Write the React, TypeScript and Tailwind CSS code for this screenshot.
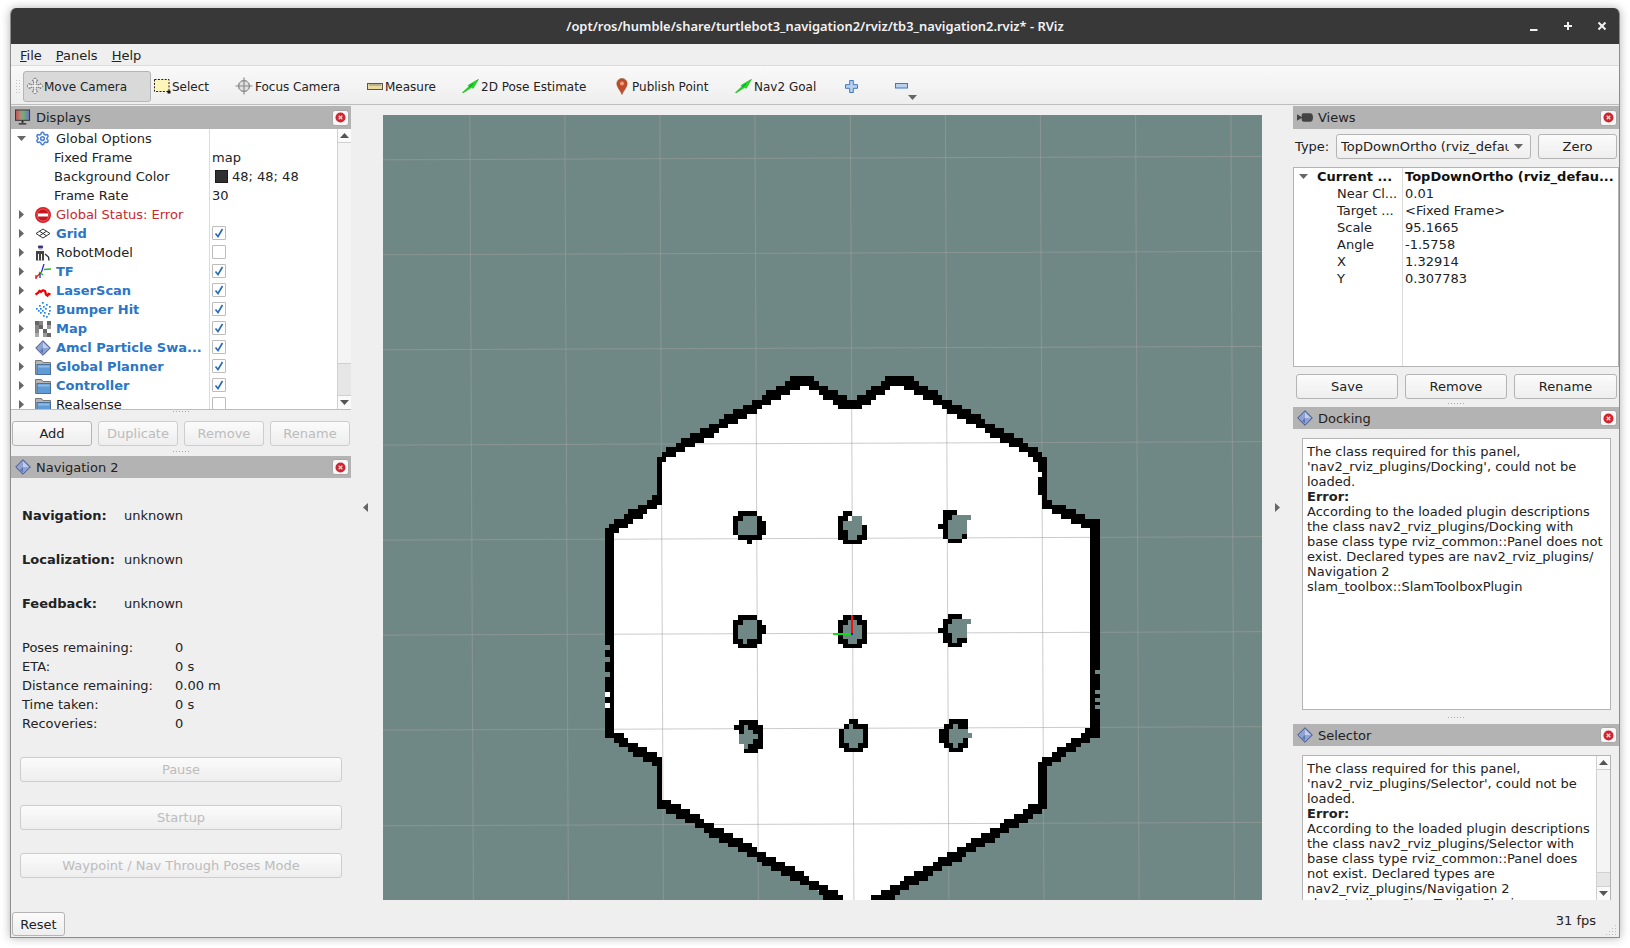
import { Settings } from 'lucide-react';
import type { ReactNode } from 'react';

// ---------- small icons ----------
function CloseBtn() {
  return (
    <div className="flex items-center justify-center w-[17px] h-[16px] bg-[#f7f7f7] border border-[#a8a8a8] rounded-[3px]">
      <svg width="11" height="11" viewBox="0 0 11 11">
        <circle cx="5.5" cy="5.5" r="5" fill="#d0242e" />
        <path d="M3.7 3.7l3.6 3.6M7.3 3.7l-3.6 3.6" stroke="#f5d5d5" strokeWidth="1.3" />
      </svg>
    </div>
  );
}

function MonitorIcon() {
  return (
    <svg width="17" height="17" viewBox="0 0 17 17">
      <defs>
        <linearGradient id="mon" x1="0" x2="1" y1="0" y2="0">
          <stop offset="0" stopColor="#c05050" />
          <stop offset="0.35" stopColor="#b08a80" />
          <stop offset="0.55" stopColor="#70b070" />
          <stop offset="1" stopColor="#7070c8" />
        </linearGradient>
      </defs>
      <rect x="0.5" y="0.5" width="15" height="11" fill="url(#mon)" stroke="#333" />
      <path d="M7 12h2v2H7zM4 14.5h8V16H4z" fill="#222" />
    </svg>
  );
}

function DiamondIcon({ size = 16 }: { size?: number }) {
  return (
    <svg width={size} height={size} viewBox="0 0 16 16">
      <path d="M8 .7L15.3 8 8 15.3.7 8z" fill="#8fa3d3" stroke="#3d4f8a" />
      <path d="M8 2.5L13.5 8 8 8z" fill="#c3cfe9" />
      <path d="M8 8l-3 3 3 2.5z" fill="#5f76b4" />
    </svg>
  );
}

function FolderIcon() {
  return (
    <svg width="16" height="16" viewBox="0 0 16 16">
      <path d="M.5 1.500h6l1.500 2h7.500v12H.5z" fill="#b4b4b4" stroke="#777" />
      <rect x="2" y="5.500" width="13.500" height="10" fill="#5f9bd6" stroke="#49709c" />
      <rect x="3" y="6.500" width="11.500" height="2" fill="#8dbbe6" />
    </svg>
  );
}

function RowIcon({ name }: { name: string }) {
  if (name === 'gear') return <Settings className="w-[15px] h-[15px] text-[#4a7fd4]" strokeWidth={2.4} />;
  if (name === 'status')
    return (
      <svg width="16" height="16" viewBox="0 0 16 16">
        <circle cx="8" cy="8" r="8" fill="#d81e26" />
        <circle cx="8" cy="8" r="6" fill="#c8161e" stroke="#f0a0a0" strokeWidth="0.5" />
        <rect x="3" y="6.5" width="10" height="3" fill="#fff" />
      </svg>
    );
  if (name === 'grid')
    return (
      <svg width="16" height="16" viewBox="0 0 16 16" fill="none" stroke="#333" strokeWidth="1">
        <path d="M8 3L15 7.500 8 12 1 7.500z" />
        <path d="M4.500 5.200L11.500 9.800M11.500 5.200L4.500 9.800" />
      </svg>
    );
  if (name === 'robot')
    return (
      <svg width="16" height="16" viewBox="0 0 16 16">
        <rect x="3" y="0.500" width="5" height="3" rx="1" fill="#3a3a7a" />
        <rect x="3.500" y="3.800" width="4" height="1.200" fill="#ccc" />
        <rect x="1" y="6" width="8" height="9.500" fill="#444" />
        <path d="M3 9h1v6.500H3zM6 9h1v6.500H6z" fill="#fff" />
        <path d="M10 9l3.500 3 .5 3.500" stroke="#333" strokeWidth="1.400" fill="none" />
      </svg>
    );
  if (name === 'tf')
    return (
      <svg width="16" height="16" viewBox="0 0 16 16" fill="none" strokeWidth="1.300">
        <path d="M6.500 8L9 0" stroke="#2a2ad0" />
        <path d="M9 5.500L16 5" stroke="#22c022" />
        <path d="M6.500 8L.5 14" stroke="#e02020" />
        <path d="M1 11v4" stroke="#e02020" />
        <path d="M4 8l4 3" stroke="#22c022" />
        <path d="M5 9v5" stroke="#2a2ad0" />
      </svg>
    );
  if (name === 'laser')
    return (
      <svg width="16" height="16" viewBox="0 0 16 16" fill="none">
        <path d="M.5 11.500L3 10l1.500-2 1.500.8 2-1.600 2 .8 1 3.500 1.500 1 1-1.700 2 .700" stroke="#f00000" strokeWidth="2.300" />
      </svg>
    );
  if (name === 'bumper')
    return (
      <svg width="16" height="16" viewBox="0 0 16 16" fill="#1f84e8">
        {[
          [7, 0], [11, 2], [4, 3], [8, 4], [14, 4], [1, 6], [5, 6], [10, 6], [3, 8], [7, 8], [14, 8], [5, 10], [9, 10], [13, 11], [8, 13], [11, 14],
        ].map(([x, y], i) => (
          <rect key={i} x={x} y={y} width="1.700" height="1.700" />
        ))}
      </svg>
    );
  if (name === 'map')
    return (
      <svg width="16" height="16" viewBox="0 0 16 16">
        <rect width="16" height="16" fill="#fff" />
        {[
          [0, 0, '#666'], [4, 0, '#888'], [12, 0, '#666'], [0, 4, '#888'], [4, 4, '#666'], [12, 4, '#999'], [8, 4, '#fff'], [0, 8, '#888'], [8, 8, '#666'], [0, 12, '#aaa'], [8, 12, '#999'], [12, 12, '#666'],
        ].map(([x, y, c], i) => (
          <rect key={i} x={x as number} y={y as number} width="4" height="4" fill={c as string} />
        ))}
      </svg>
    );
  if (name === 'diamond') return <DiamondIcon />;
  if (name === 'folder') return <FolderIcon />;
  return null;
}

// ---------- toolbar icons ----------
function MoveIcon() {
  return (
    <svg width="18" height="18" viewBox="0 0 18 18">
      <path
        d="M9 .8l3 3H10.300v3.900h3.900V6l3 3-3 3v-1.700h-3.900v3.900H12l-3 3-3-3h1.700v-3.900H3.800V12l-3-3 3-3v1.700h3.900V3.800H6z"
        fill="#f2f2f2"
        stroke="#666"
        strokeWidth="0.900"
        strokeDasharray="1.600 0.600"
      />
    </svg>
  );
}
function SelectIcon() {
  return (
    <svg width="17" height="15" viewBox="0 0 17 15">
      <rect x="0.500" y="0.500" width="14.500" height="12" fill="#fdf6b8" stroke="#222" strokeDasharray="2 1.400" />
      <rect x="13.500" y="11.500" width="3" height="3" fill="#111" />
    </svg>
  );
}
function FocusIcon() {
  return (
    <svg width="18" height="18" viewBox="0 0 18 18" fill="none" stroke="#8a8a8a">
      <circle cx="9" cy="9" r="5.500" fill="#e0e0e0" />
      <path d="M9 .5v17M.5 9h17" strokeWidth="1.200" />
      <path d="M6 4h6M6 14h6M4 6v6M14 6v6" strokeWidth="0.700" />
    </svg>
  );
}
function RulerIcon() {
  return (
    <svg width="16" height="7" viewBox="0 0 16 7">
      <rect x="0.500" y="0.500" width="15" height="6" fill="#e9dca2" stroke="#555" />
      <path d="M3 1v2M5 1v2M7 1v2M9 1v2M11 1v2M13 1v2" stroke="#666" strokeWidth="0.700" />
    </svg>
  );
}
function GreenArrow() {
  return (
    <svg width="17" height="14" viewBox="0 0 17 14">
      <path d="M.5 13.500L7 7.500l-.8-1.200L16.500.3l-5.500 9.200-1.200-1.300L1 14z" fill="#14e414" stroke="#0aa00a" strokeWidth="0.500" />
      <path d="M7 8l4-3" stroke="#055" strokeWidth="0.600" />
    </svg>
  );
}
function PinIcon() {
  return (
    <svg width="12" height="17" viewBox="0 0 12 17">
      <path d="M6 16.500C4.500 12.500.8 9.500.8 5.600a5.200 5.200 0 0 1 10.400 0C11.200 9.500 7.500 12.500 6 16.500z" fill="#c2492b" stroke="#8c5a2a" strokeWidth="0.600" />
      <circle cx="6" cy="5.500" r="2" fill="#e9a37a" />
    </svg>
  );
}
function PlusIcon() {
  return (
    <svg width="13" height="13" viewBox="0 0 13 13">
      <path d="M4.700 .5h3.600v4.200h4.200v3.600H8.300v4.200H4.700V8.300H.5V4.700h4.200z" fill="#b9d0ee" stroke="#3f78c0" />
    </svg>
  );
}
function MinusIcon() {
  return (
    <svg width="13" height="6" viewBox="0 0 13 6">
      <rect x="0.500" y="0.500" width="12" height="4.500" fill="#b9d0ee" stroke="#3f78c0" />
    </svg>
  );
}

// ---------- generic widgets ----------
function Btn({ children, w, h = 'h-[25px]', disabled = false }: { children: ReactNode; w: string; h?: string; disabled?: boolean }) {
  return (
    <div
      className={`${w} ${h} flex items-center justify-center rounded-[3px] border bg-gradient-to-b from-[#fbfbfb] to-[#eeeeee] ${
        disabled ? 'border-[#cdcdcd] text-[#bcbcbc]' : 'border-[#b4b4b4] text-[#222222]'
      }`}
    >
      {children}
    </div>
  );
}

function Dots() {
  return (
    <div className="flex justify-center gap-[2px]">
      {[0, 1, 2, 3, 4, 5].map((i) => (
        <span key={i} className="w-px h-px bg-[#a8a8a8]" />
      ))}
    </div>
  );
}

function Triangle({ dir, color = '#666666' }: { dir: 'r' | 'd' | 'u' | 'l'; color?: string }) {
  const pts = { r: '1,0 6,4.500 1,9', d: '0,1 9,1 4.500,6', u: '0,6 9,6 4.500,1', l: '6,0 1,4.500 6,9' }[dir];
  const wide = dir === 'd' || dir === 'u';
  return (
    <svg width={wide ? 9 : 7} height={wide ? 7 : 9} viewBox={wide ? '0 0 9 7' : '0 0 7 9'}>
      <polygon points={pts} fill={color} />
    </svg>
  );
}

function DockTitle({ icon, title, h }: { icon: ReactNode; title: string; h: string }) {
  return (
    <div className={`${h} shrink-0 flex items-center bg-[#b3b3b3] pl-[4px] pr-[2px]`}>
      <span className="w-[16px] flex justify-center">{icon}</span>
      <span className="ml-[5px] flex-1 text-[#222222]">{title}</span>
      <CloseBtn />
    </div>
  );
}

function Scroll({ children }: { children: ReactNode }) {
  return <div className="w-[14px] shrink-0 flex flex-col border-l border-[#d0d0d0] bg-[#f4f4f4]">{children}</div>;
}
function ScrollBtn({ dir }: { dir: 'u' | 'd' }) {
  return (
    <div className={`h-[14px] shrink-0 flex items-center justify-center bg-[#fafafa] ${dir === 'u' ? 'border-b' : 'border-t'} border-[#d0d0d0]`}>
      <Triangle dir={dir} color="#555555" />
    </div>
  );
}

// ---------- Displays tree ----------
type Row = { name: string; icon?: string; bold?: boolean; check?: boolean; value?: string; child?: boolean; arrow?: 'r' | 'd'; red?: boolean; swatch?: boolean };
const displayRows: Row[] = [
  { name: 'Global Options', icon: 'gear', arrow: 'd' },
  { name: 'Fixed Frame', child: true, value: 'map' },
  { name: 'Background Color', child: true, value: '48; 48; 48', swatch: true },
  { name: 'Frame Rate', child: true, value: '30' },
  { name: 'Global Status: Error', icon: 'status', arrow: 'r', red: true },
  { name: 'Grid', icon: 'grid', arrow: 'r', bold: true, check: true },
  { name: 'RobotModel', icon: 'robot', arrow: 'r', check: false },
  { name: 'TF', icon: 'tf', arrow: 'r', bold: true, check: true },
  { name: 'LaserScan', icon: 'laser', arrow: 'r', bold: true, check: true },
  { name: 'Bumper Hit', icon: 'bumper', arrow: 'r', bold: true, check: true },
  { name: 'Map', icon: 'map', arrow: 'r', bold: true, check: true },
  { name: 'Amcl Particle Swa...', icon: 'diamond', arrow: 'r', bold: true, check: true },
  { name: 'Global Planner', icon: 'folder', arrow: 'r', bold: true, check: true },
  { name: 'Controller', icon: 'folder', arrow: 'r', bold: true, check: true },
  { name: 'Realsense', icon: 'folder', arrow: 'r', check: false },
];

function Check({ on }: { on: boolean }) {
  return (
    <div className="w-[14px] h-[14px] mb-[2px] flex items-center justify-center bg-white border border-[#bcbcbc] rounded-[1px]">
      {on && (
        <svg width="10" height="10" viewBox="0 0 10 10" fill="none">
          <path d="M1.500 5.500L4 8.500 8.500 1" stroke="#2a6cb8" strokeWidth="1.700" />
        </svg>
      )}
    </div>
  );
}

function DisplayRow({ r }: { r: Row }) {
  const color = r.red ? 'text-[#c8282e]' : r.bold ? 'text-[#2a76c6] font-bold' : 'text-[#222222]';
  return (
    <div className="h-[19px] shrink-0 flex items-center">
      <div className="w-[198px] shrink-0 flex items-center">
        <span className="w-[20px] flex justify-center pl-[1px]">{r.arrow && <Triangle dir={r.arrow} />}</span>
        {r.child ? (
          <span className="ml-[23px] whitespace-nowrap text-[#222222]">{r.name}</span>
        ) : (
          <>
            <span className="w-[17px] ml-[3px] flex justify-center">{r.icon && <RowIcon name={r.icon} />}</span>
            <span className={`ml-[5px] whitespace-nowrap ${color}`}>{r.name}</span>
          </>
        )}
      </div>
      <div className="flex-1 h-full flex items-center border-l border-[#dcdcdc] pl-[2px]">
        {r.check !== undefined && <Check on={r.check} />}
        {r.swatch && <span className="ml-[3px] mr-[4px] w-[13px] h-[13px] bg-[#303030] border border-[#1c1c1c]" />}
        {r.value && <span className="text-[#222222]">{r.value}</span>}
      </div>
    </div>
  );
}

// ---------- 3D view drawing ----------
const CELL = 4.76;
type Seg = [number, number, number, number, number, number];
const segs: Seg[] = [
  [607, 531, 657, 498, 0, 1],
  [659, 457, 659, 500, 0, 0],
  [662, 455, 803, 377, 0, 1],
  [793, 378, 812, 378, 0, 1],
  [812, 382, 847, 402, 0, 1],
  [842, 403, 861, 403, 0, 1],
  [860, 400, 895, 377, 0, 1],
  [893, 378, 910, 378, 0, 1],
  [908, 381, 1042, 455, 0, 1],
  [1043, 457, 1043, 503, 0, 0],
  [1039, 462, 1039, 472, 0, 0],
  [1039, 477, 1039, 494, 0, 0],
  [1043, 500, 1090, 523, 0, 1],
  [1091, 523, 1091, 735, 1, 0],
  [1088, 737, 1047, 765, 0, -1],
  [1040, 762, 1040, 806, 1, 0],
  [1043, 808, 868, 908, 0, -1],
  [606, 533, 606, 735, 1, 0],
  [615, 735, 658, 759, 0, 1],
  [660, 763, 660, 805, 0, 0],
  [663, 801, 838, 896, 0, 1],
];

// diagonal bands are about 2 cells tall, walls are whole cells
function wallCells() {
  const seen = new Map<string, { x: number; y: number; w: number; h: number }>();
  for (const [x1, y1, x2, y2, ox, oy] of segs) {
    const n = Math.ceil(Math.hypot(x2 - x1, y2 - y1));
    for (let i = 0; i <= n; i++) {
      const cx = Math.floor((x1 + ((x2 - x1) * i) / n) / CELL);
      const cy = Math.floor((y1 + ((y2 - y1) * i) / n) / CELL);
      const x = cx * CELL;
      const y = cy * CELL;
      const h = oy ? CELL * 2 : CELL;
      const w = ox ? CELL * 2 : CELL;
      seen.set(`${cx},${cy},${oy}`, { x, y: oy < 0 ? y - CELL : y, w, h });
    }
  }
  return [...seen.values()];
}

const obstacles: { x: number; y: number; m: string[] }[] = [
  { x: 733, y: 511, m: [' ####  ', '##...# ', '#....##', '#....##', '#....##', ' ##### ', '   #   '] },
  { x: 838, y: 511, m: [' ##   ', '## .. ', '#.... ', '#....#', '##...#', '##..##', ' #### '] },
  { x: 938, y: 510, m: [' ###   ', ' ##....', ' #.... ', '##.... ', ' #.... ', ' #...# ', '  ###  '] },
  { x: 733, y: 615, m: [' ####  ', '##...# ', '#....##', '#....##', '#....# ', '##.### ', ' ####  '] },
  { x: 838, y: 615, m: [' #### ', '##..##', '#....#', '#....#', '#....#', '##..##', ' #### '] },
  { x: 938, y: 614, m: ['  ###  ', ' ##....', ' #.... ', '##.... ', ' ##... ', ' ##.## ', '  ###  '] },
  { x: 734, y: 720, m: [' #### ', '##.###', ' #..##', ' ....#', ' ...##', '  .###', '  ### '] },
  { x: 839, y: 719, m: ['  ##  ', ' #.###', '#....#', '#....#', '#....#', '##..##', ' #### '] },
  { x: 939, y: 719, m: ['  #### ', ' ##.## ', '##.... ', '##.....', '##...# ', ' ##.## ', '  ###  '] },
];

const TEAL = '#708885';
const vGrid = [376, 471, 566, 661, 756, 851.5, 946.5, 1041.5, 1136.7, 1232];
const hGrid = [159, 254, 349, 444.3, 539.3, 634.3, 729.3, 825];

function MapView() {
  const poly = '610,533 660,500 660,459 803,380 847,405 897,380 1042,459 1042,502 1092,527 1092,735 1045,763 1045,806 875,900 835,900 661,803 661,762 612,735';
  return (
    <svg width="879" height="785" viewBox="383 115 879 785" className="block">
      <rect x="383" y="115" width="879" height="785" fill={TEAL} />
      <polygon points={poly} fill="#ffffff" />
      {vGrid.map((x) => (
        <line key={x} x1={x - 1.1} y1={115} x2={x + 2.4} y2={900} stroke="#a0a0a0" strokeOpacity="0.55" />
      ))}
      {hGrid.map((y) => (
        <line key={y} x1={383} y1={y + 0.8} x2={1262} y2={y - 2.6} stroke="#a0a0a0" strokeOpacity="0.55" />
      ))}
      <g shapeRendering="crispEdges">
        {wallCells().map((c) => (
          <rect key={`${c.x},${c.y},${c.h},${c.w}`} x={c.x} y={c.y} width={c.w} height={c.h} fill="#000000" />
        ))}
        {/* notches along the outer walls */}
        {[645, 657, 672].map((y) => (
          <rect key={y} x="605" y={y} width="5" height="5" fill={TEAL} />
        ))}
        {[692, 703].map((y) => (
          <rect key={y} x="605" y={y} width="5" height="5" fill="#ffffff" />
        ))}
        {[670, 690, 698, 705].map((y) => (
          <rect key={y} x="1095" y={y} width="5" height="4" fill={TEAL} />
        ))}
        <rect x="1037" y="472" width="5" height="5" fill="#ffffff" />
        {obstacles.map((o, k) =>
          o.m.map((row, j) =>
            row.split('').map((c, i) =>
              c === ' ' ? null : (
                <rect key={`${k}-${j}-${i}`} x={o.x + i * CELL} y={o.y + j * CELL} width={CELL} height={CELL} fill={c === '#' ? '#000000' : TEAL} />
              ),
            ),
          ),
        )}
        <rect x="833" y="633" width="19" height="2" fill="#10e010" />
        <rect x="851" y="615" width="2" height="19" fill="#f01010" />
        <rect x="851" y="633" width="2" height="2" fill="#1010f0" />
      </g>
    </svg>
  );
}

// ---------- error text panels ----------
function ErrorText({ lines }: { lines: string[] }) {
  return (
    <div className="flex-1 overflow-hidden pl-[4px] pt-[5px] text-[#222222] leading-[15px] whitespace-nowrap">
      {lines.map((l, i) => (
        <div key={i} className={`h-[15px] ${l === 'Error:' ? 'font-bold' : ''}`}>
          {l}
        </div>
      ))}
    </div>
  );
}

const dockingLines = [
  'The class required for this panel,',
  "'nav2_rviz_plugins/Docking', could not be",
  'loaded.',
  'Error:',
  'According to the loaded plugin descriptions',
  'the class nav2_rviz_plugins/Docking with',
  'base class type rviz_common::Panel does not',
  'exist. Declared types are nav2_rviz_plugins/',
  'Navigation 2',
  'slam_toolbox::SlamToolboxPlugin',
];
const selectorLines = [
  'The class required for this panel,',
  "'nav2_rviz_plugins/Selector', could not be",
  'loaded.',
  'Error:',
  'According to the loaded plugin descriptions',
  'the class nav2_rviz_plugins/Selector with',
  'base class type rviz_common::Panel does',
  'not exist. Declared types are',
  'nav2_rviz_plugins/Navigation 2',
  'slam_toolbox::SlamToolboxPlugin',
];

const viewRows = [
  ['Near Cl...', '0.01'],
  ['Target ...', '<Fixed Frame>'],
  ['Scale', '95.1665'],
  ['Angle', '-1.5758'],
  ['X', '1.32914'],
  ['Y', '0.307783'],
];

function Tool({ w, pl, gap, icon, label, active }: { w: string; pl: string; gap: string; icon: ReactNode; label?: string; active?: boolean }) {
  return (
    <div className={`${w} ${pl} h-[31px] shrink-0 flex items-center ${active ? 'bg-[#d9d9d9] border border-[#b4b4b4] rounded-[3px]' : ''}`}>
      {icon}
      {label && <span className={`${gap} pt-[1px] whitespace-nowrap text-[12px] text-[#222222]`}>{label}</span>}
    </div>
  );
}

function Status({ label, value }: { label: string; value: string }) {
  return (
    <div className="h-[19px] flex items-center text-[#222222]">
      <span className="w-[153px]">{label}</span>
      <span>{value}</span>
    </div>
  );
}

function NavLine({ label, value }: { label: string; value: string }) {
  return (
    <div className="h-[44px] flex items-center text-[#222222]">
      <span className="w-[102px] font-bold">{label}</span>
      <span>{value}</span>
    </div>
  );
}

export default function App() {
  return (
    <div className="w-[1630px] h-[948px] overflow-hidden bg-white pt-[8px] pl-[10px] text-[13px] leading-none [font-family:'DejaVu_Sans',sans-serif]">
      <div className="w-[1610px] h-[930px] flex flex-col rounded-t-[6px] overflow-hidden bg-[#efefef] border-x border-b border-[#8c8c8c] shadow-[0_0_10px_rgba(0,0,0,0.3)]">
        {/* title bar */}
        <div className="-mx-px h-[36px] shrink-0 grid grid-cols-[1fr_auto_1fr] items-center bg-[#383838] text-[#f2f2f2]">
          <div />
          <div className="text-[12.9px] font-semibold [font-family:'Noto_Sans',sans-serif]">/opt/ros/humble/share/turtlebot3_navigation2/rviz/tb3_navigation2.rviz* - RViz</div>
          <div className="flex justify-end items-center gap-[22px] pr-[12px]">
            <svg width="12" height="12" viewBox="0 0 12 12"><rect x="2" y="9" width="7.500" height="2" fill="#f2f2f2" /></svg>
            <svg width="12" height="12" viewBox="0 0 12 12"><path d="M5 2h2v3h3v2H7v3H5V7H2V5h3z" fill="#f2f2f2" /></svg>
            <svg width="12" height="12" viewBox="0 0 12 12"><path d="M2.500 2.500l7 7M9.500 2.500l-7 7" stroke="#f2f2f2" strokeWidth="2" /></svg>
          </div>
        </div>

        {/* menu bar */}
        <div className="h-[22px] shrink-0 flex items-center gap-[14px] pl-[9px] pt-[2px] border-b border-[#dcdcdc] text-[#222222]">
          {['File', 'Panels', 'Help'].map((m) => (
            <span key={m}>
              <span className="underline">{m[0]}</span>
              {m.slice(1)}
            </span>
          ))}
        </div>

        {/* toolbar */}
        <div className="h-[39px] shrink-0 flex items-center pl-[4px] pt-[2px] bg-gradient-to-b from-[#f9f9f9] to-[#eeeeee] border-b border-[#bcbcbc]">
          <div className="w-[5px] h-[15px] mr-[3px] bg-[radial-gradient(#c4c4c4_0.7px,transparent_0.8px)] bg-[length:3px_3px]" />
          <Tool active w="w-[128px]" pl="pl-[2px]" gap="ml-0" icon={<MoveIcon />} label="Move Camera" />
          <Tool w="w-[84px]" pl="pl-[3px]" gap="ml-[1px]" icon={<SelectIcon />} label="Select" />
          <Tool w="w-[131px]" pl="pl-0" gap="ml-[2px]" icon={<FocusIcon />} label="Focus Camera" />
          <Tool w="w-[96px]" pl="pl-[1px]" gap="ml-[2px]" icon={<RulerIcon />} label="Measure" />
          <Tool w="w-[153px]" pl="pl-0" gap="ml-[2px]" icon={<GreenArrow />} label="2D Pose Estimate" />
          <Tool w="w-[120px]" pl="pl-[1px]" gap="ml-[4px]" icon={<PinIcon />} label="Publish Point" />
          <Tool w="w-[110px]" pl="pl-0" gap="ml-[2px]" icon={<GreenArrow />} label="Nav2 Goal" />
          <Tool w="w-[50px]" pl="pl-0" gap="" icon={<PlusIcon />} />
          <div className="relative">
            <Tool w="w-[30px]" pl="pl-0" gap="" icon={<MinusIcon />} />
            <span className="absolute left-[13px] bottom-[1px]"><Triangle dir="d" color="#666666" /></span>
          </div>
        </div>

        {/* main area */}
        <div className="h-[795px] shrink-0 flex pt-[1px] overflow-hidden">
          {/* left docks */}
          <div className="w-[340px] shrink-0 flex flex-col">
            <DockTitle icon={<MonitorIcon />} title="Displays" h="h-[23px]" />
            <div className="h-[281px] shrink-0 flex bg-white border-b border-[#bcbcbc]">
              <div className="flex-1 flex flex-col overflow-hidden">
                {displayRows.map((r) => (
                  <DisplayRow key={r.name} r={r} />
                ))}
              </div>
              <Scroll>
                <ScrollBtn dir="u" />
                <div className="flex-1" />
                <div className="h-[32px] bg-[#e6e6e6] border-t border-[#d0d0d0]" />
                <ScrollBtn dir="d" />
              </Scroll>
            </div>
            <div className="h-[11px] shrink-0 flex items-center"><div className="w-full -mt-[8px]"><Dots /></div></div>
            <div className="flex pl-[1px] gap-[6px]">
              <Btn w="w-[80px]">Add</Btn>
              <Btn w="w-[80px]" disabled>Duplicate</Btn>
              <Btn w="w-[80px]" disabled>Remove</Btn>
              <Btn w="w-[80px]" disabled>Rename</Btn>
            </div>
            <div className="h-[10px] shrink-0 flex items-center"><div className="w-full"><Dots /></div></div>
            <DockTitle icon={<DiamondIcon />} title="Navigation 2" h="h-[22px]" />
            <div className="flex-1 flex flex-col pt-[15px] pl-[11px]">
              <NavLine label="Navigation:" value="unknown" />
              <NavLine label="Localization:" value="unknown" />
              <NavLine label="Feedback:" value="unknown" />
              <div className="h-[13px]" />
              <Status label="Poses remaining:" value="0" />
              <Status label="ETA:" value="0 s" />
              <Status label="Distance remaining:" value="0.00 m" />
              <Status label="Time taken:" value="0 s" />
              <Status label="Recoveries:" value="0" />
              <div className="flex flex-col gap-[23px] mt-[24px] -ml-[2px]">
                <Btn w="w-[322px]" disabled>Pause</Btn>
                <Btn w="w-[322px]" disabled>Startup</Btn>
                <Btn w="w-[322px]" disabled>Waypoint / Nav Through Poses Mode</Btn>
              </div>
            </div>
          </div>

          {/* left splitter handle */}
          <div className="w-[32px] shrink-0 flex items-center justify-center pt-[8px] pr-[4px]">
            <Triangle dir="l" />
          </div>

          {/* 3D view */}
          <div className="w-[879px] shrink-0 pt-[9px]">
            <MapView />
          </div>

          {/* right splitter handle */}
          <div className="w-[31px] shrink-0 flex items-center justify-center pt-[8px]">
            <Triangle dir="r" />
          </div>

          {/* right docks */}
          <div className="w-[326px] shrink-0 flex flex-col">
            <DockTitle
              icon={
                <svg width="17" height="9" viewBox="0 0 17 9" fill="#444444">
                  <path d="M0 1l5 3V1.500Q5.500 0 7 0h7q3 0 3 4.500T14 9H7Q5.500 9 5 7.500V5L0 8z" />
                </svg>
              }
              title="Views"
              h="h-[23px]"
            />
            <div className="h-[38px] shrink-0 flex items-center pb-[4px] pl-[2px] pr-[2px]">
              <span className="w-[41px] text-[#222222]">Type:</span>
              <div className="w-[195px] h-[25px] flex items-center justify-between pl-[4px] pr-[7px] rounded-[3px] border border-[#b4b4b4] bg-gradient-to-b from-[#fbfbfb] to-[#eeeeee]">
                <span className="w-[168px] overflow-hidden whitespace-nowrap leading-[17px] text-[#222222]">TopDownOrtho (rviz_defau</span>
                <Triangle dir="d" color="#666666" />
              </div>
              <div className="ml-[7px]"><Btn w="w-[79px]">Zero</Btn></div>
            </div>
            <div className="h-[200px] shrink-0 bg-white border border-[#b4b4b4] flex flex-col relative">
              <div className="h-[17px] flex items-center font-bold text-[#111111]">
                <span className="w-[109px] shrink-0 flex items-center pl-[5px]">
                  <Triangle dir="d" />
                  <span className="ml-[9px]">Current ...</span>
                </span>
                <span className="pl-[2px] whitespace-nowrap">TopDownOrtho (rviz_defau...</span>
              </div>
              {viewRows.map(([k, v]) => (
                <div key={k} className="h-[17px] flex items-center text-[#222222]">
                  <span className="w-[109px] shrink-0 pl-[43px] whitespace-nowrap">{k}</span>
                  <span className="pl-[2px]">{v}</span>
                </div>
              ))}
              <div className="absolute top-0 bottom-0 left-[108px] w-px bg-[#dcdcdc]" />
            </div>
            <div className="flex gap-[7px] mt-[7px] pl-[3px]">
              <Btn w="w-[102px]">Save</Btn>
              <Btn w="w-[102px]">Remove</Btn>
              <Btn w="w-[103px]">Rename</Btn>
            </div>
            <div className="h-[8px] shrink-0 flex items-center"><div className="w-full"><Dots /></div></div>
            <DockTitle icon={<DiamondIcon />} title="Docking" h="h-[22px]" />
            <div className="h-[272px] shrink-0 mt-[9px] ml-[9px] mr-[8px] bg-white border border-[#b4b4b4] flex">
              <ErrorText lines={dockingLines} />
            </div>
            <div className="h-[14px] shrink-0 flex items-center"><div className="w-full"><Dots /></div></div>
            <DockTitle icon={<DiamondIcon />} title="Selector" h="h-[22px]" />
            <div className="h-[146px] shrink-0 mt-[9px] ml-[9px] mr-[8px] bg-white border border-[#b4b4b4] flex">
              <ErrorText lines={selectorLines} />
              <Scroll>
                <ScrollBtn dir="u" />
                <div className="flex-1" />
                <div className="h-[14px] bg-[#e6e6e6] border-t border-[#d0d0d0]" />
                <ScrollBtn dir="d" />
              </Scroll>
            </div>
          </div>
        </div>

        {/* status bar */}
        <div className="flex-1 flex items-start pl-[1px] pt-[12px]">
          <Btn w="w-[53px]" h="h-[24px]">Reset</Btn>
          <span className="ml-auto mt-[2px] text-[#222222]">31 fps</span>
          <svg width="23" height="13" viewBox="0 0 23 13" className="self-end mb-[1px]" fill="#bdbdbd">
            {[[19, 2], [16, 5], [19, 5], [13, 8], [16, 8], [19, 8], [10, 11], [13, 11], [16, 11], [19, 11]].map(([x, y]) => (
              <rect key={`${x}-${y}`} x={x} y={y} width="1" height="1" />
            ))}
          </svg>
        </div>
      </div>
    </div>
  );
}
